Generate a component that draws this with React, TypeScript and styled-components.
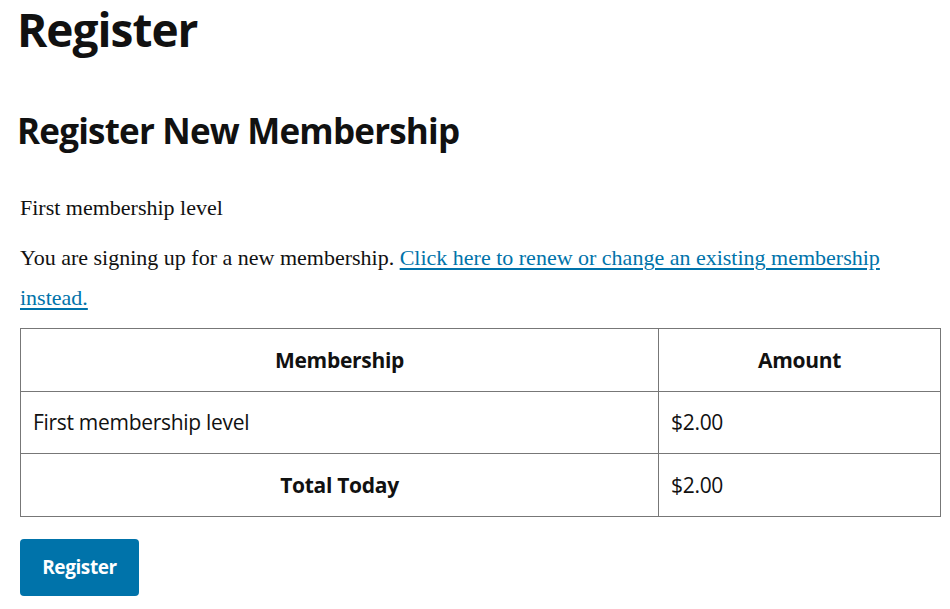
import styled, { createGlobalStyle } from 'styled-components';

const GlobalStyle = createGlobalStyle`
  html, body {
    margin: 0;
    padding: 0;
    background: #fff;
  }
`;

const Page = styled.div`
  padding: 0 9px 0 20px;
  color: #111;
`;

const Title = styled.h1`
  margin: 0 0 0 -3px;
  padding-top: 2px;
  font-family: 'Open Sans', sans-serif;
  font-weight: 700;
  font-size: 46px;
  line-height: 54px;
  letter-spacing: -1px;
`;

const SubTitle = styled.h2`
  margin: 53px 0 0 -3px;
  font-family: 'Open Sans', sans-serif;
  font-weight: 700;
  font-size: 35px;
  line-height: 44px;
  letter-spacing: -0.8px;
`;

const Text = styled.p`
  margin: 0;
  font-family: 'Liberation Serif', serif;
  font-size: 22px;
  line-height: 40px;
  color: #111;
`;

const Level = styled(Text)`
  margin-top: 35px;
`;

const Notice = styled(Text)`
  margin-top: 10px;
`;

const Link = styled.a`
  color: #0073aa;
  text-decoration: underline;
  text-decoration-thickness: 1.5px;
  text-underline-offset: 3px;
`;

const Table = styled.table`
  width: 100%;
  margin-top: 10px;
  border-collapse: collapse;
  font-family: 'Open Sans', sans-serif;
  font-size: 21px;
  color: #111;
`;

const Cell = styled.td<{ $center?: boolean; $bold?: boolean }>`
  border: 1px solid #777;
  height: 61.67px;
  padding: 0 12px;
  text-align: ${(p) => (p.$center ? 'center' : 'left')};
  font-weight: ${(p) => (p.$bold ? 700 : 400)};
  letter-spacing: -0.3px;
  vertical-align: middle;
`;

const Button = styled.button`
  margin-top: 22px;
  width: 119px;
  height: 57px;
  border: 0;
  border-radius: 4px;
  background: #0073aa;
  color: #fff;
  font-family: 'Open Sans', sans-serif;
  font-weight: 700;
  font-size: 19px;
  letter-spacing: -0.4px;
  cursor: pointer;
`;

export default function App() {
  return (
    <>
      <GlobalStyle />
      <Page>
        <Title>Register</Title>
        <SubTitle>Register New Membership</SubTitle>
        <Level>First membership level</Level>
        <Notice>
          You are signing up for a new membership.{' '}
          <Link href="#">Click here to renew or change an existing membership instead.</Link>
        </Notice>
        <Table>
          <colgroup>
            <col style={{ width: '638px' }} />
            <col />
          </colgroup>
          <tbody>
            <tr>
              <Cell as="th" $center $bold>
                Membership
              </Cell>
              <Cell as="th" $center $bold>
                Amount
              </Cell>
            </tr>
            <tr>
              <Cell>First membership level</Cell>
              <Cell>$2.00</Cell>
            </tr>
            <tr>
              <Cell $center $bold>
                Total Today
              </Cell>
              <Cell>$2.00</Cell>
            </tr>
          </tbody>
        </Table>
        <Button>Register</Button>
      </Page>
    </>
  );
}
